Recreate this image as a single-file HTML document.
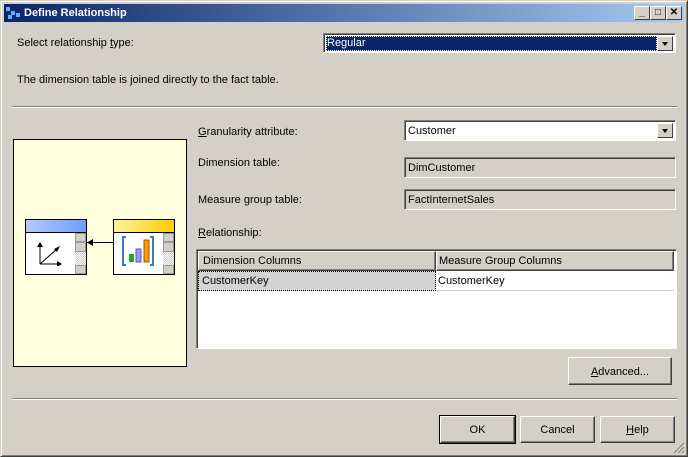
<!DOCTYPE html>
<html><head><style>
*{margin:0;padding:0;box-sizing:border-box}
body{width:688px;height:457px;background:#d4d0c8;font-family:"Liberation Sans",sans-serif;font-size:11px;color:#000;position:relative;overflow:hidden}
.a{position:absolute}
.win{left:0;top:0;width:688px;height:457px;border:1px solid;border-color:#d4d0c8 #404040 #404040 #d4d0c8;box-shadow:inset 1px 1px 0 #fff,inset -1px -1px 0 #808080}
.title{left:4px;top:4px;width:680px;height:18px;background:linear-gradient(90deg,#0a246a,#a6caf0);color:#fff;font-weight:bold;font-size:11px;line-height:18px;padding-left:20px}
.tb{top:6px;width:16px;height:14px;background:#d4d0c8;border:1px solid;border-color:#fff #404040 #404040 #fff;font-size:10px;text-align:center;line-height:12px;font-weight:bold}
.sunk{border:1px solid;border-color:#808080 #fff #fff #808080;box-shadow:inset 1px 1px 0 #404040}
.btn{border:1px solid;border-color:#fff #404040 #404040 #fff;box-shadow:inset -1px -1px 0 #808080;text-align:center;background:#d4d0c8}
.sep{height:2px;border-top:1px solid #808080;border-bottom:1px solid #fff}
.dd{position:absolute;right:2px;top:2px;width:16px;height:15px;background:#d4d0c8;border:1px solid;border-color:#fff #404040 #404040 #fff}
.dd:after{content:"";position:absolute;left:4px;top:5px;border:3.5px solid transparent;border-top:4px solid #000}
.txt{padding-left:3px;line-height:20px}
u{text-decoration:underline}
</style></head><body>
<div class="a win"></div>
<div class="a title">Define Relationship</div>
<svg class="a" style="left:5px;top:6px" width="16" height="14"><rect x="1" y="1" width="4" height="4" fill="#6af"/><rect x="6" y="5" width="4" height="4" fill="#6af"/><rect x="3" y="9" width="4" height="4" fill="#6af"/><rect x="11" y="7" width="4" height="4" fill="#6af"/></svg>
<div class="a tb" style="left:634px">_</div>
<div class="a tb" style="left:650px">□</div>
<div class="a tb" style="left:666px">✕</div>

<div class="a" style="left:17px;top:37px">Select relationship <u>t</u>ype:</div>
<div class="a sunk" style="left:323px;top:33px;width:353px;height:20px;background:#fff">
 <div class="a" style="left:2px;top:2px;width:331px;height:15px;background:#0a246a;color:#fff;line-height:15px;padding-left:1px;outline:1px dotted #fff;outline-offset:-1px">Regular</div>
 <div class="dd"></div></div>
<div class="a" style="left:17px;top:74px">The dimension table is joined directly to the fact table.</div>
<div class="a sep" style="left:12px;top:106px;width:665px"></div>

<div class="a" style="left:13px;top:139px;width:174px;height:228px;background:#ffffdd;border:1px solid #000"></div>
<div class="a" style="left:25px;top:219px;width:62px;height:56px;background:#fff;border:1px solid #000">
 <div style="height:13px;background:linear-gradient(90deg,#b3ccff,#6f9cff);border-bottom:1px solid #000"></div>
 <div class="a" style="right:0;top:13px;width:11px;height:41px;background:repeating-conic-gradient(#ccc 0 25%,#fff 0 50%) 0 0/2px 2px"><div style="height:9px;background:#d4d0c8;border:1px solid #999"></div><div style="height:10px;background:#d4d0c8;border:1px solid #999"></div><div class="a" style="bottom:0;width:11px;height:9px;background:#d4d0c8;border:1px solid #999"></div></div>
 <svg class="a" style="left:8px;top:20px" width="36" height="26"><path d="M6 24V4M6 24H26M6 24L24 8" stroke="#000" stroke-width="1"/><path d="M3 7L6 2L9 7Z M23 21L28 24L23 27Z M20 9L26 6L23 12Z" fill="#000"/></svg>
</div>
<div class="a" style="left:87px;top:242px;width:26px;height:1px;background:#000"></div>
<svg class="a" style="left:86px;top:238px" width="8" height="9"><path d="M1 4.5L7 1V8Z" fill="#000"/></svg>
<div class="a" style="left:113px;top:219px;width:62px;height:56px;background:#fff;border:1px solid #000">
 <div style="height:13px;background:linear-gradient(90deg,#fff2a0,#ffcc00);border-bottom:1px solid #000"></div>
 <div class="a" style="right:0;top:13px;width:11px;height:41px;background:repeating-conic-gradient(#ccc 0 25%,#fff 0 50%) 0 0/2px 2px"><div style="height:9px;background:#d4d0c8;border:1px solid #999"></div><div style="height:10px;background:#d4d0c8;border:1px solid #999"></div><div class="a" style="bottom:0;width:11px;height:9px;background:#d4d0c8;border:1px solid #999"></div></div>
 <svg class="a" style="left:8px;top:15px" width="36" height="36"><path d="M4 2H1V30H4M28 2H31V30H28" stroke="#3a7bc8" stroke-width="2" fill="none"/><rect x="7" y="19" width="5" height="8" fill="#2a2"/><rect x="14" y="14" width="5" height="13" fill="#99f" stroke="#55c"/><rect x="22" y="5" width="5" height="22" fill="#f90" stroke="#a50"/></svg>
</div>

<div class="a" style="left:198px;top:126px"><u>G</u>ranularity attribute:</div>
<div class="a" style="left:198px;top:157px">Dimension table:</div>
<div class="a" style="left:198px;top:194px">Measure group table:</div>
<div class="a" style="left:198px;top:227px"><u>R</u>elationship:</div>
<div class="a sunk" style="left:404px;top:120px;width:272px;height:21px;background:#fff"><div class="txt">Customer</div><div class="dd"></div></div>
<div class="a sunk" style="left:404px;top:157px;width:272px;height:21px"><div class="txt">DimCustomer</div></div>
<div class="a sunk" style="left:404px;top:189px;width:272px;height:21px"><div class="txt">FactInternetSales</div></div>

<div class="a sunk" style="left:196px;top:249px;width:481px;height:100px;background:#fff">
 <div class="a btn" style="left:1px;top:1px;width:238px;height:20px;text-align:left;padding-left:4px;line-height:18px">Dimension Columns</div>
 <div class="a btn" style="left:239px;top:1px;width:238px;height:20px;text-align:left;padding-left:2px;line-height:18px">Measure Group Columns</div>
 <div class="a" style="left:1px;top:21px;width:238px;height:20px;background:#d3d3d3;outline:1px dotted #000;outline-offset:-1px;padding-left:4px;line-height:20px">CustomerKey</div>
 <div class="a" style="left:239px;top:21px;width:238px;height:20px;border-bottom:1px solid #d4d0c8;padding-left:2px;line-height:20px">CustomerKey</div>
</div>

<div class="a btn" style="left:568px;top:357px;width:104px;height:28px;line-height:28px"><u>A</u>dvanced...</div>
<div class="a sep" style="left:12px;top:398px;width:665px"></div>
<div class="a btn" style="left:440px;top:416px;width:75px;height:27px;line-height:27px;outline:1px solid #000">OK</div>
<div class="a btn" style="left:520px;top:416px;width:75px;height:27px;line-height:27px">Cancel</div>
<div class="a btn" style="left:600px;top:416px;width:75px;height:27px;line-height:27px"><u>H</u>elp</div>
<svg class="a" style="left:673px;top:442px" width="12" height="12"><path d="M11 1L1 11M11 5L5 11M11 9L9 11" stroke="#808080"/></svg>
</body></html>
